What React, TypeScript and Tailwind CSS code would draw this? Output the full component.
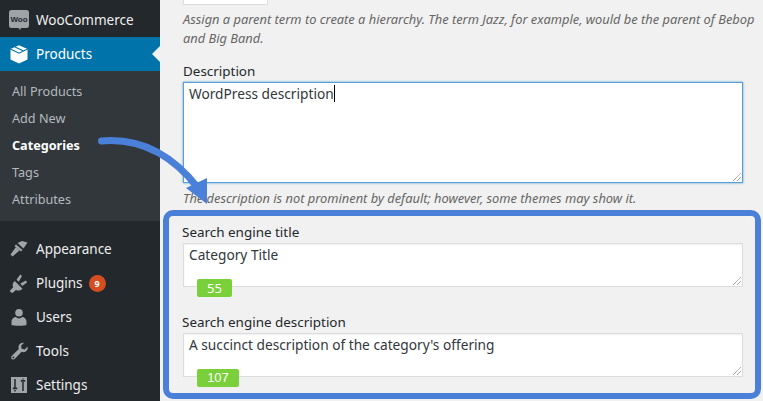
import React from "react";

const Grip = () => (
  <svg className="absolute right-[1px] bottom-[1px]" width="9" height="9" viewBox="0 0 9 9" fill="none">
    <path d="M1 9 L9 1 M5 9 L9 5" stroke="#777" strokeWidth="1" strokeDasharray="1 0.6" />
  </svg>
);

const Woo = () => (
  <svg width="20" height="20" viewBox="0 0 20 20">
    <path d="M2.500 0h15A2.500 2.500 0 0 1 20 2.500v13a2.500 2.500 0 0 1-2.500 2.500H12l-1 2-1.500-2h-7A2.500 2.500 0 0 1 0 15.500v-13A2.500 2.500 0 0 1 2.500 0z" fill="#9ea3a8" />
    <text x="10" y="12" textAnchor="middle" fontSize="8" fontWeight="700" fill="#23282d" fontFamily="'Liberation Sans',sans-serif">Woo</text>
  </svg>
);

const Box = () => (
  <svg width="20" height="20" viewBox="0 0 20 20">
    <path d="M10 1.200 18.500 5v10.500L10 19.500 1.500 15.500V5z" fill="#fff" />
    <path d="M1.500 5 10 9.200 18.500 5M6 3 14.500 7" fill="none" stroke="#0073aa" strokeWidth="1.100" />
  </svg>
);

const Brush = () => (
  <svg width="20" height="20" viewBox="0 0 20 20" fill="#a0a5aa">
    <path d="M8.500 4 13 2 18.500 3.500 14.500 9.500z" />
    <path d="M7 5.500 13.500 11 12 12.500 5.500 7z" />
    <path d="M7 8 10.500 11.500 3.500 17.500 1.500 15.500z" />
  </svg>
);

const Plug = () => (
  <svg width="20" height="20" viewBox="0 0 20 20" fill="#a0a5aa">
    <path d="M5.800 8 13.500 15.700c-2 2-4.600 2.300-6.500 1.200L3.500 20 1.300 19l-.3-1.500 3.200-3.300C3 12 3.600 10 5.800 8z" />
    <path d="M7.500 6.800 11.200 1.500 13 2.900 9.800 8.800zM11.300 10.500l5.700-3 1 1.900-4.800 3.600z" />
  </svg>
);

const User = () => (
  <svg width="20" height="20" viewBox="0 0 20 20" fill="#a0a5aa">
    <circle cx="10" cy="5.700" r="3.800" />
    <path d="M2.500 18v-3.500c0-2.500 2.500-4.500 4.500-4.500 1 1 2 1.400 3 1.400s2-.4 3-1.400c2 0 4.500 2 4.500 4.500V18c-1 1-14 1-15 0z" />
  </svg>
);

const Wrench = () => (
  <svg width="20" height="20" viewBox="0 0 20 20" fill="#a0a5aa">
    <path d="M18.500 5.500c.6 2-.1 4-1.800 5-1.300.8-2.800.8-4.100.3L6 17.800c-1 1-2.400 1-3.200.2-.9-.9-.9-2.300.1-3.200l6.900-6.700c-.5-1.400-.4-3 .4-4.300 1-1.700 3-2.500 4.900-2l-3 3 .6 3 3 .7z" />
    <circle cx="4.400" cy="16.400" r=".9" fill="#23282d" />
  </svg>
);

const Sliders = () => (
  <svg width="20" height="20" viewBox="0 0 20 20">
    <rect x="2" y="2" width="16" height="16" fill="#a0a5aa" />
    <path d="M6 4v9M6 15v1.500M14 3.500v1M14 7v9" stroke="#23282d" strokeWidth="1.500" />
    <path d="M3.800 12.500h4.400v1.800H3.800zM11.800 5h4.400v1.800h-4.400z" fill="#23282d" />
  </svg>
);

function MainItem({ icon, children }: { icon: React.ReactNode; children: React.ReactNode }) {
  return (
    <div className="h-[34px] flex items-center text-[#eee] text-[13.5px]">
      <span className="w-[36px] pl-[9px] flex items-center shrink-0">{icon}</span>
      {children}
    </div>
  );
}

function Sub({ children, active }: { children: React.ReactNode; active?: boolean }) {
  return (
    <div className={"h-[27px] flex items-center pl-[12px] text-[12.65px] " + (active ? "text-white font-bold" : "text-[#b4b9be]")}>
      {children}
    </div>
  );
}

function Field({ label, value, badge, badgeClass }: { label: string; value: string; badge: string; badgeClass: string }) {
  return (
    <div className="relative">
      <div className="text-[13.45px] leading-[18px] text-[#23282d] pl-[2px]">{label}</div>
      <div className="relative mt-[2px] ml-[3px] h-[44px] w-[560px] bg-white border border-[#ddd] shadow-[inset_0_1px_2px_rgba(0,0,0,0.07)] pl-[5px] pt-[1px] text-[13.7px] leading-[20px] text-[#32373c]">
        {value}
        <Grip />
      </div>
      <div className={"absolute left-[17px] top-[56px] h-[18px] rounded-[2px] bg-[#7ad03a] text-white text-[13px] leading-[18px] text-center " + badgeClass}>{badge}</div>
    </div>
  );
}

export default function App() {
  return (
    <div className="relative w-[763px] h-[401px] overflow-hidden flex bg-[#f1f1f1] font-['Noto_Sans','Open_Sans',sans-serif]">
      <aside className="w-[160px] shrink-0 bg-[#23282d] pt-[3px]">
        <MainItem icon={<Woo />}>WooCommerce</MainItem>
        <div className="relative h-[34px] flex items-center bg-[#0073aa] text-white text-[13.5px]">
          <span className="w-[36px] pl-[9px] shrink-0 flex items-center"><Box /></span>
          Products
          <span className="absolute right-0 top-[9px] border-y-[8px] border-y-transparent border-r-[8px] border-r-[#f1f1f1]" />
        </div>
        <div className="bg-[#32373c] h-[150px] pt-[7px]">
          <Sub>All Products</Sub>
          <Sub>Add New</Sub>
          <Sub active>Categories</Sub>
          <Sub>Tags</Sub>
          <Sub>Attributes</Sub>
        </div>
        <div className="pt-[11px]">
          <MainItem icon={<Brush />}>Appearance</MainItem>
          <MainItem icon={<Plug />}>
            Plugins
            <span className="ml-[6px] w-[17px] h-[17px] rounded-full bg-[#d54e21] text-white text-[9px] font-bold leading-[17px] text-center">9</span>
          </MainItem>
          <MainItem icon={<User />}>Users</MainItem>
          <MainItem icon={<Wrench />}>Tools</MainItem>
          <MainItem icon={<Sliders />}>Settings</MainItem>
        </div>
      </aside>

      <main className="flex-1 min-w-0 pl-[3px]">
        <div className="ml-[20px] w-[85px] h-[5px] bg-white border-x border-b border-[#ddd]" />
        <p className="ml-[20px] mt-[5px] w-[578px] text-[12.85px] leading-[19px] italic text-[#666]">
          Assign a parent term to create a hierarchy. The term Jazz, for example, would be the parent of Bebop and Big Band.
        </p>
        <div className="ml-[20px] mt-[14px] text-[13.45px] leading-[18px] text-[#23282d]">Description</div>
        <div className="relative ml-[20px] mt-[2px] w-[560px] h-[101px] bg-white border border-[#5b9dd9] shadow-[0_0_2px_rgba(30,140,190,0.8)] pl-[5px] pt-[1px] text-[13.7px] leading-[20px] text-[#32373c]">
          WordPress description<span className="inline-block w-[1px] h-[17px] bg-black align-[-3px]" />
          <Grip />
        </div>
        <p className="ml-[20px] mt-[6px] text-[12.85px] leading-[19px] italic text-[#666]">
          The description is not prominent by default; however, some themes may show it.
        </p>
        <section className="mt-[2px] w-[598px] h-[189px] rounded-[10px] border-[6px] border-[#4a80d8] pl-[11px] pt-[7px] flex flex-col gap-[26px]">
          <Field label="Search engine title" value="Category Title" badge="55" badgeClass="w-[35px]" />
          <Field label="Search engine description" value="A succinct description of the category's offering" badge="107" badgeClass="w-[42px] font-['Liberation_Sans',sans-serif]" />
        </section>
      </main>

      <svg className="absolute left-0 top-0 pointer-events-none" width="763" height="401" viewBox="0 0 763 401" fill="none">
        <path d="M101.500 141C138 138 170 152 198 188" stroke="#4a80d8" strokeWidth="7" strokeLinecap="round" />
        <path d="M207 178 207 204 186 188z" fill="#4a80d8" />
      </svg>
    </div>
  );
}
